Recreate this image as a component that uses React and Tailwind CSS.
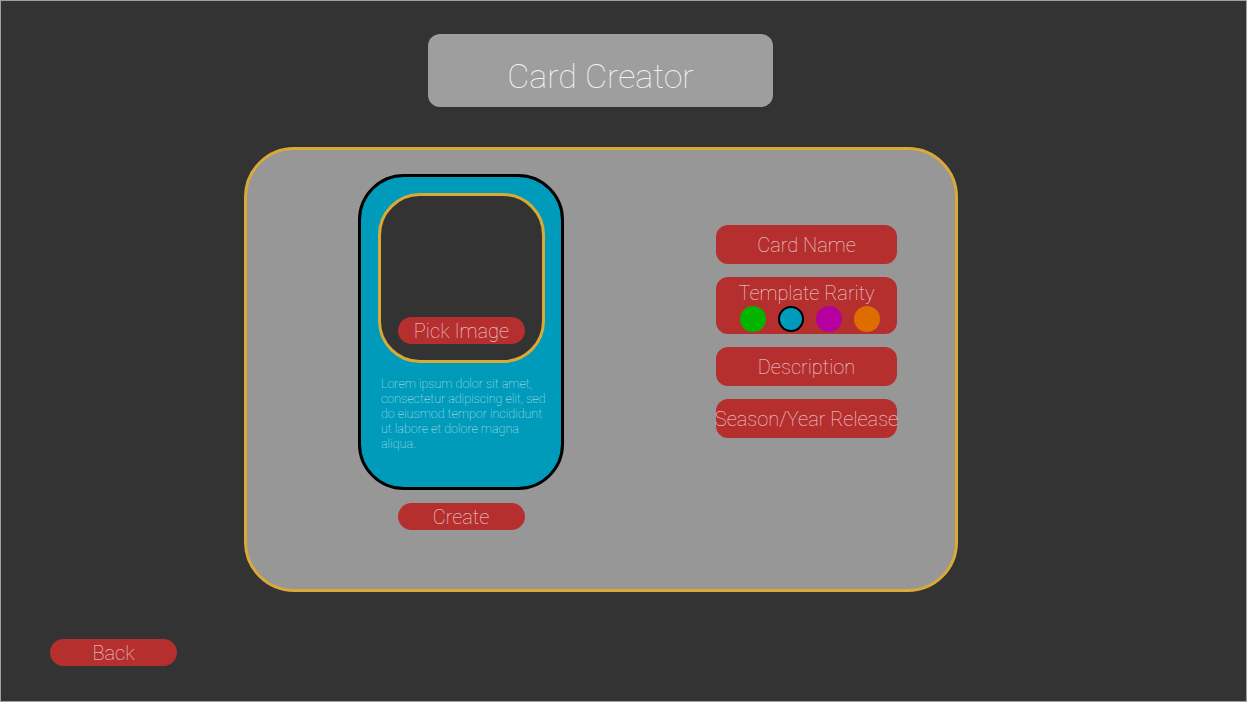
import React from "react";

const Pill = ({ children, className = "" }) => (
  <button
    className={`w-[127px] h-[27px] rounded-full bg-[#b52f2f] text-[#f0dada] text-[20px] leading-none font-thin flex items-center justify-center ${className}`}
  >
    {children}
  </button>
);

const Field = ({ children }) => (
  <div className="w-[181px] h-[39px] rounded-[12px] bg-[#b52f2f] text-[#f0dada] text-[20px] font-thin flex items-center justify-center whitespace-nowrap">
    {children}
  </div>
);

const App = () => {
  const rarities = ["bg-[#00b400]", "bg-[#009abb] border-2 border-black", "bg-[#b5009f]", "bg-[#dd6d00]"];

  return (
    <div
      className="w-[1247px] h-[702px] bg-[#333333] border border-[#a0a0a0] flex flex-col overflow-hidden"
      style={{ fontFamily: "Roboto, 'Open Sans', sans-serif" }}
    >
      <div className="ml-[427px] mt-[33px] w-[345px] h-[73px] rounded-[12px] bg-[#9e9e9e] flex items-center justify-center pt-[11px] text-[#f4f4f4] text-[34px] font-thin">
        Card Creator
      </div>

      <div className="ml-[243px] mt-[40px] w-[714px] h-[445px] rounded-[50px] border-[3px] border-[#d9aa36] bg-[#979797] flex">
        <div className="ml-[111px] mt-[24px] flex flex-col items-center">
          <div className="w-[206px] h-[316px] rounded-[46px] border-[3px] border-black bg-[#009abb] flex flex-col">
            <div className="ml-[17px] mt-[16px] w-[167px] h-[170px] rounded-[42px] border-[3px] border-[#d9aa36] bg-[#333333] flex flex-col justify-end items-center pb-[16px]">
              <Pill>Pick Image</Pill>
            </div>
            <p className="ml-[20px] mt-[13px] w-[173px] text-[12.5px] leading-[15px] font-thin text-[#cde9f0]">
              Lorem ipsum dolor sit amet, consectetur adipiscing elit, sed do eiusmod tempor incididunt ut labore et dolore magna aliqua.
            </p>
          </div>
          <Pill className="mt-[13px]">Create</Pill>
        </div>

        <div className="ml-[152px] mt-[75px] flex flex-col gap-[13px]">
          <Field>Card Name</Field>
          <div className="w-[181px] h-[57px] rounded-[12px] bg-[#b52f2f] text-[#f0dada] text-[20px] font-thin flex flex-col items-center pt-[4px]">
            <span className="leading-[24px]">Template Rarity</span>
            <div className="flex gap-[12px] mt-[1px] ml-[7px]">
              {rarities.map((c, i) => (
                <span key={i} className={`w-[26px] h-[26px] rounded-full ${c}`} />
              ))}
            </div>
          </div>
          <Field>Description</Field>
          <Field>Season/Year Release</Field>
        </div>
      </div>

      <div className="ml-[49px] mt-[47px]">
        <Pill>Back</Pill>
      </div>
    </div>
  );
};

export default App;
